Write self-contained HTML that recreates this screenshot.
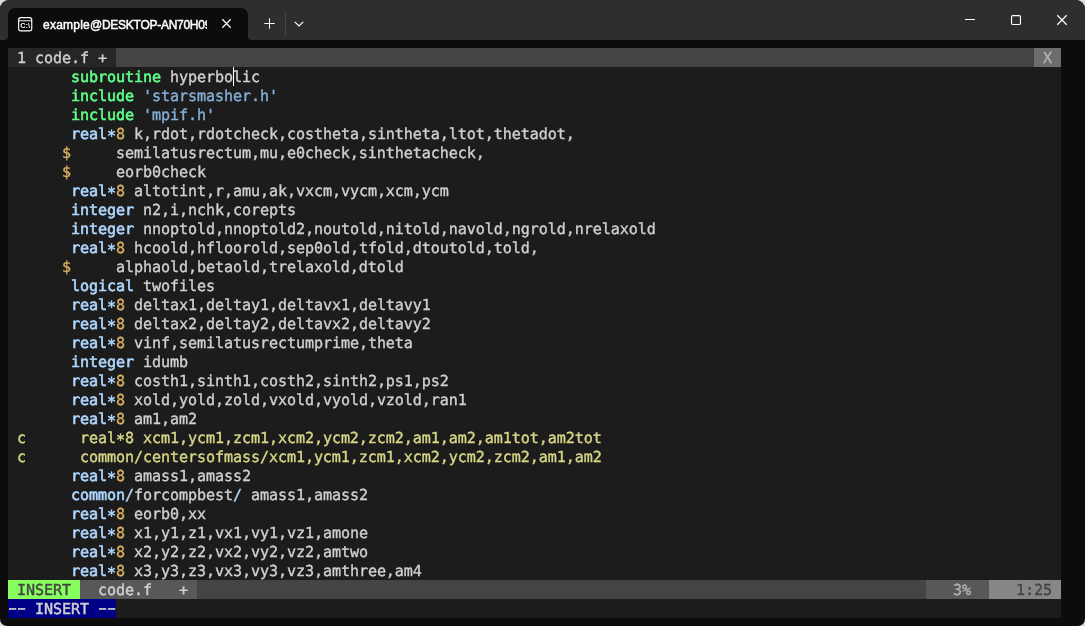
<!DOCTYPE html>
<html><head><meta charset="utf-8"><title>example@DESKTOP-AN70H09</title>
<style>
html,body{margin:0;padding:0;}
body{width:1085px;height:626px;overflow:hidden;background:#dcdcdc;position:relative;}
#win{position:absolute;left:0;top:0;width:1085px;height:626px;background:#0c0c0c;border-radius:9px 9px 7px 7px;overflow:hidden;}
#bar{position:absolute;left:0;top:0;width:1085px;height:40px;background:#2e2e2e;}
#tab{position:absolute;left:8px;top:8px;width:240px;height:32px;background:#0c0c0c;border-radius:7px 7px 0 0;}
#tab:before,#tab:after{content:"";position:absolute;bottom:0;width:4px;height:4px;}
#tab:before{left:-4px;background:radial-gradient(circle at 0 0,rgba(12,12,12,0) 3.5px,#0c0c0c 4.5px);}
#tab:after{right:-4px;background:radial-gradient(circle at 100% 0,rgba(12,12,12,0) 3.5px,#0c0c0c 4.5px);}
#title{position:absolute;left:35px;top:8px;width:164px;height:18px;overflow:hidden;white-space:nowrap;color:#fff;
 font:12px/18px "Liberation Sans",sans-serif;letter-spacing:-0.12px;-webkit-text-stroke:0.45px #fff;will-change:transform;}
svg{position:absolute;overflow:visible;}
#sep{position:absolute;left:285px;top:12px;width:1px;height:24px;background:#444;}
#term{position:absolute;left:8px;top:48px;width:1053px;height:570px;background:#1c1c1c;
 font-family:"DejaVu Sans Mono","Liberation Mono",monospace;font-size:15.1px;letter-spacing:-0.091px;line-height:21px;text-rendering:geometricPrecision;color:#d0d0d0;-webkit-text-stroke:0.36px currentColor;}
.r{height:19px;white-space:pre;position:relative;overflow:hidden;}
b{font-weight:normal;-webkit-text-stroke:0.6px currentColor;}
.g{color:#5fff87;} .t{color:#afd7ff;} .o{color:#afd7ff;} .n{color:#d7af5f;} .s{color:#87afd7;} .c{color:#d7d787;}
.a{position:relative;top:2px;-webkit-text-stroke:0.5px currentColor;}
.tl{background:#444;}
.ta{display:inline-block;background:#262626;color:#d0d0d0;}
.tx{position:absolute;right:0;top:0;background:#6c6c6c;color:#b2b2b2;}
.sl{background:#444;}
.sl span{display:inline-block;height:19px;vertical-align:top;}
.m{background:#87ff5f;color:#444;}
.f{background:#585858;color:#d0d0d0;}
.p{position:absolute;left:918px;top:0;background:#585858;color:#b2b2b2;}
.l{position:absolute;left:981px;top:0;background:#878787;color:#444;}
.im{display:inline-block;background:#000087;color:#d0d0d0;-webkit-text-stroke:0.45px currentColor;}
#tx{position:absolute;left:0;top:0;width:1053px;height:570px;will-change:transform;}
i{font-style:normal;display:inline-block;width:9px;transform:translateY(-1.2px) scaleX(1.67);}
#cur{position:absolute;left:225px;top:19px;width:1px;height:19px;background:#fff;}
</style></head><body>
<div id="win">
<div id="bar">
 <div id="tab">
  <svg style="left:9.8px;top:8.7px;will-change:transform" width="14.4" height="14.6" viewBox="0 0 14.4 14.6" fill="none" stroke="#fff" stroke-width="1.15"><rect x="0.65" y="0.65" width="13.1" height="13.3" rx="2.2" fill="#000"/><path d="M0.65 3.8H13.75" stroke-width="1"/><text x="2.2" y="11.1" font-family="Liberation Sans,sans-serif" font-size="6.6" font-weight="bold" fill="#fff" stroke="none" textLength="9.8" lengthAdjust="spacingAndGlyphs">C:\</text></svg>
  <div id="title"><span style="letter-spacing:0.24px">example</span><span style="letter-spacing:-0.27px">@DESKTOP-AN70H09</span></div>
  <svg style="left:214px;top:11px" width="9" height="9" viewBox="0 0 9 9" stroke="#fff" stroke-width="1.25"><path d="M0.3 0.3L8.7 8.7M8.7 0.3L0.3 8.7"/></svg>
 </div>
 <svg style="left:264px;top:18px" width="11" height="11" viewBox="0 0 11 11" stroke="#fff" stroke-width="1"><path d="M5.5 0.3V10.7M0.3 5.5H10.7"/></svg>
 <div id="sep"></div>
 <svg style="left:294px;top:21px" width="10" height="6" viewBox="0 0 10 6" stroke="#fff" stroke-width="1.2" fill="none"><path d="M0.8 0.8L5 5L9.2 0.8"/></svg>
 <svg style="left:965px;top:19px" width="10" height="1" viewBox="0 0 10 1"><rect width="10" height="1" fill="#fff"/></svg>
 <svg style="left:1011px;top:15px" width="10" height="10" viewBox="0 0 10 10" fill="none" stroke="#fff" stroke-width="1.15"><rect x="0.55" y="0.55" width="8.9" height="8.9" rx="1.3"/></svg>
 <svg style="left:1057px;top:15px" width="10" height="10" viewBox="0 0 10 10" stroke="#fff" stroke-width="1.25"><path d="M0.3 0.3L9.7 9.7M9.7 0.3L0.3 9.7"/></svg>
</div>
<div id="term"><div id="tx">
<div class="r tl"><span class="ta"> 1 code.f + </span><span class="tx"> X </span></div>
<div class="r">       <b class="g">subroutine</b> hyperbolic</div>
<div class="r">       <b class="g">include</b> <span class="s">'starsmasher.h'</span></div>
<div class="r">       <b class="g">include</b> <span class="s">'mpif.h'</span></div>
<div class="r">       <b class="t">real</b><span class="o a">*</span><span class="n">8</span> k,rdot,rdotcheck,costheta,sintheta,ltot,thetadot,</div>
<div class="r">      <span class="n">$</span>     semilatusrectum,mu,e0check,sinthetacheck,</div>
<div class="r">      <span class="n">$</span>     eorb0check</div>
<div class="r">       <b class="t">real</b><span class="o a">*</span><span class="n">8</span> altotint,r,amu,ak,vxcm,vycm,xcm,ycm</div>
<div class="r">       <b class="t">integer</b> n2,i,nchk,corepts</div>
<div class="r">       <b class="t">integer</b> nnoptold,nnoptold2,noutold,nitold,navold,ngrold,nrelaxold</div>
<div class="r">       <b class="t">real</b><span class="o a">*</span><span class="n">8</span> hcoold,hfloorold,sep0old,tfold,dtoutold,told,</div>
<div class="r">      <span class="n">$</span>     alphaold,betaold,trelaxold,dtold</div>
<div class="r">       <b class="t">logical</b> twofiles</div>
<div class="r">       <b class="t">real</b><span class="o a">*</span><span class="n">8</span> deltax1,deltay1,deltavx1,deltavy1</div>
<div class="r">       <b class="t">real</b><span class="o a">*</span><span class="n">8</span> deltax2,deltay2,deltavx2,deltavy2</div>
<div class="r">       <b class="t">real</b><span class="o a">*</span><span class="n">8</span> vinf,semilatusrectumprime,theta</div>
<div class="r">       <b class="t">integer</b> idumb</div>
<div class="r">       <b class="t">real</b><span class="o a">*</span><span class="n">8</span> costh1,sinth1,costh2,sinth2,ps1,ps2</div>
<div class="r">       <b class="t">real</b><span class="o a">*</span><span class="n">8</span> xold,yold,zold,vxold,vyold,vzold,ran1</div>
<div class="r">       <b class="t">real</b><span class="o a">*</span><span class="n">8</span> am1,am2</div>
<div class="r"> <span class="c">c      real<span class="a">*</span>8 xcm1,ycm1,zcm1,xcm2,ycm2,zcm2,am1,am2,am1tot,am2tot</span></div>
<div class="r"> <span class="c">c      common/centersofmass/xcm1,ycm1,zcm1,xcm2,ycm2,zcm2,am1,am2</span></div>
<div class="r">       <b class="t">real</b><span class="o a">*</span><span class="n">8</span> amass1,amass2</div>
<div class="r">       <b class="t">common</b><span class="o">/</span>forcompbest<span class="o">/</span> amass1,amass2</div>
<div class="r">       <b class="t">real</b><span class="o a">*</span><span class="n">8</span> eorb0,xx</div>
<div class="r">       <b class="t">real</b><span class="o a">*</span><span class="n">8</span> x1,y1,z1,vx1,vy1,vz1,amone</div>
<div class="r">       <b class="t">real</b><span class="o a">*</span><span class="n">8</span> x2,y2,z2,vx2,vy2,vz2,amtwo</div>
<div class="r">       <b class="t">real</b><span class="o a">*</span><span class="n">8</span> x3,y3,z3,vx3,vy3,vz3,amthree,am4</div>
<div class="r sl"><span class="m"> INSERT </span><span class="f">  code.f   + </span><span class="p">   3%  </span><span class="l">   1:25 </span></div>
<div class="r"><span class="im"><i>-</i><i>-</i> INSERT <i>-</i><i>-</i></span></div>
<div id="cur"></div>
</div></div>
</div>
</body></html>
